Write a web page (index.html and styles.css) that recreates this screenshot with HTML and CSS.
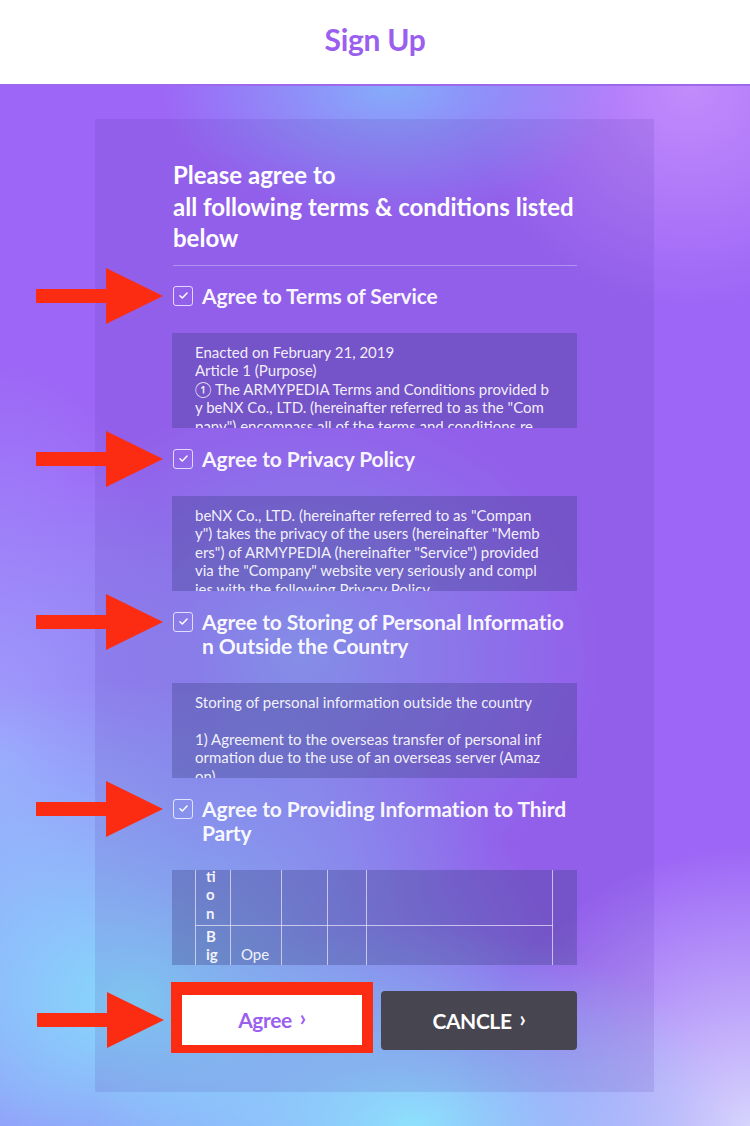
FILE: index.html
```html
<!DOCTYPE html>
<html lang="en">
<head>
<meta charset="utf-8">
<title>Sign Up</title>
<link rel="stylesheet" href="styles.css">
</head>
<body>
<header class="topbar">
  <h1 class="topbar-title">Sign Up</h1>
</header>
<main class="page">
  <section class="card">
    <h2 class="intro">Please agree to<br>all following terms &amp; conditions listed<br>below</h2>
    <hr class="divider">

    <div class="agree-row">
      <svg class="arrow" viewBox="0 0 127 56" aria-hidden="true"><path d="M0 21H70V0L127 28L70 56V35H0Z"/></svg>
      <span class="check"><svg viewBox="0 0 20 20"><path d="M5.8 10.2l2.8 2.8L14.2 7"/></svg></span>
      <span class="agree-label">Agree to Terms of Service</span>
    </div>
    <div class="terms-box">
      <p class="terms-text">Enacted on February 21, 2019<br>Article 1 (Purpose)<br>&#9312; The ARMYPEDIA Terms and Conditions provided b<br>y beNX Co., LTD. (hereinafter referred to as the "Com<br>pany") encompass all of the terms and conditions re</p>
    </div>

    <div class="agree-row">
      <svg class="arrow" viewBox="0 0 127 56" aria-hidden="true"><path d="M0 21H70V0L127 28L70 56V35H0Z"/></svg>
      <span class="check"><svg viewBox="0 0 20 20"><path d="M5.8 10.2l2.8 2.8L14.2 7"/></svg></span>
      <span class="agree-label">Agree to Privacy Policy</span>
    </div>
    <div class="terms-box">
      <p class="terms-text">beNX Co., LTD. (hereinafter referred to as "Compan<br>y") takes the privacy of the users (hereinafter "Memb<br>ers") of ARMYPEDIA (hereinafter "Service") provided<br>via the "Company" website very seriously and compl<br>ies with the following Privacy Policy.</p>
    </div>

    <div class="agree-row">
      <svg class="arrow" viewBox="0 0 127 56" aria-hidden="true"><path d="M0 21H70V0L127 28L70 56V35H0Z"/></svg>
      <span class="check"><svg viewBox="0 0 20 20"><path d="M5.8 10.2l2.8 2.8L14.2 7"/></svg></span>
      <span class="agree-label">Agree to Storing of Personal Informatio<br>n Outside the Country</span>
    </div>
    <div class="terms-box">
      <p class="terms-text">Storing of personal information outside the country<br>&nbsp;<br>1) Agreement to the overseas transfer of personal inf<br>ormation due to the use of an overseas server (Amaz<br>on)</p>
    </div>

    <div class="agree-row">
      <svg class="arrow" viewBox="0 0 127 56" aria-hidden="true"><path d="M0 21H70V0L127 28L70 56V35H0Z"/></svg>
      <span class="check"><svg viewBox="0 0 20 20"><path d="M5.8 10.2l2.8 2.8L14.2 7"/></svg></span>
      <span class="agree-label">Agree to Providing Information to Third<br>Party</span>
    </div>
    <div class="terms-box table-box">
      <table class="info-table">
        <colgroup>
          <col class="c1"><col class="c2"><col class="c3"><col class="c4"><col class="c5">
        </colgroup>
        <tr class="r1">
          <td class="narrow"><div class="cut">ti<br>o<br>n</div></td>
          <td></td><td></td><td></td><td></td>
        </tr>
        <tr class="r2">
          <td class="narrow">B<br>ig</td>
          <td class="low">Ope</td><td></td><td></td><td></td>
        </tr>
      </table>
    </div>

    <div class="actions">
      <svg class="arrow arrow-btn" viewBox="0 0 127 56" aria-hidden="true"><path d="M0 21H70V0L127 28L70 56V35H0Z"/></svg>
      <button class="btn btn-agree">Agree <span class="chev">&#8250;</span></button>
      <button class="btn btn-cancel">CANCLE <span class="chev">&#8250;</span></button>
    </div>
  </section>
</main>
</body>
</html>
```

FILE: styles.css
```css
html, body {
  margin: 0;
  padding: 0;
}

body {
  width: 750px;
  min-height: 1126px;
  font-family: Lato, "Noto Sans", sans-serif;
  color: #fff;
  background-color: #9d66f6;
}

.topbar {
  height: 78px;
  padding-bottom: 6px;
  box-sizing: content-box;
  background: #fff;
  border-bottom: 2px solid #9e68ee;
  display: flex;
  align-items: center;
  justify-content: center;
}

.topbar-title {
  margin: 0;
  font-size: 30px;
  font-weight: 700;
  color: #9b5ff0;
  letter-spacing: -0.3px;
}

.page {
  min-height: 1040px;
  padding-top: 33px;
  box-sizing: border-box;
  background:
    radial-gradient(ellipse 230px 130px at 52% 0%, #85acfa, rgba(133,172,250,0)),
    radial-gradient(ellipse 220px 220px at 92% 0%, #c28cfc, rgba(194,140,252,0)),
    radial-gradient(ellipse 430px 320px at 18% 88%, #86dcfc, rgba(134,220,252,0)),
    radial-gradient(ellipse 320px 200px at 55% 100%, #90e2fc, rgba(144,226,252,0)),
    radial-gradient(ellipse 280px 280px at 100% 100%, #d6d4fd, rgba(214,212,253,0)),
    radial-gradient(ellipse 300px 260px at 40% 55%, #8c9cf2, rgba(140,156,242,0)),
    radial-gradient(ellipse 200px 400px at 0% 65%, #9ea2fc, rgba(158,162,252,0)),
    #9d66f6;
}

.card {
  width: 559px;
  margin: 0 0 0 95px;
  padding: 40px 77px 39px 77px;
  box-sizing: border-box;
  background: rgba(88, 56, 170, 0.14);
}

.intro {
  margin: 0 0 0 1px;
  font-size: 24px;
  line-height: 31.5px;
  font-weight: 700;
  letter-spacing: 0;
  color: #fff;
}

.divider {
  margin: 11px 0 0 1px;
  border: 0;
  height: 1px;
  background: rgba(255, 255, 255, 0.3);
}

.agree-row {
  position: relative;
  display: flex;
  align-items: flex-start;
  gap: 9px;
  margin-top: 19px;
  padding-left: 1px;
}

.divider + .agree-row {
  margin-top: 18px;
}

.arrow {
  position: absolute;
  left: -136px;
  top: -16px;
  width: 127px;
  height: 56px;
  fill: #fb2c12;
}

.check {
  flex: 0 0 auto;
  width: 20px;
  height: 20px;
  margin-top: 2px;
  box-sizing: border-box;
  border: 1.5px solid rgba(255, 255, 255, 0.75);
  border-radius: 3px;
  display: flex;
  align-items: center;
  justify-content: center;
}

.check svg {
  width: 17px;
  height: 17px;
  fill: none;
  stroke: #fff;
  stroke-width: 1.7;
  stroke-linecap: round;
  stroke-linejoin: round;
}

.agree-label {
  font-size: 21px;
  line-height: 24px;
  font-weight: 700;
  letter-spacing: -0.1px;
  color: rgba(255, 255, 255, 0.96);
}

.terms-box {
  margin-top: 25px;
  height: 95px;
  overflow: hidden;
  background: rgba(55, 58, 128, 0.32);
  padding: 10px 24px 0 23px;
  box-sizing: border-box;
}

.terms-text {
  margin: 0;
  font-size: 15px;
  line-height: 18.6px;
  letter-spacing: 0;
  white-space: nowrap;
  color: rgba(255, 255, 255, 0.92);
}

.table-box {
  padding: 0 24px 0 23px;
}

.info-table {
  border-collapse: collapse;
  table-layout: fixed;
  width: 357px;
  font-size: 15px;
  line-height: 18.5px;
  color: rgba(255, 255, 255, 0.92);
}

.info-table col.c1 { width: 35px; }
.info-table col.c2 { width: 51px; }
.info-table col.c3 { width: 46px; }
.info-table col.c4 { width: 39px; }
.info-table col.c5 { width: 186px; }

.info-table td {
  border: 1.5px solid rgba(230, 225, 245, 0.75);
  border-top: 0;
  padding: 0 0 0 10px;
  vertical-align: top;
}

.info-table tr.r1 td {
  height: 55px;
}

.info-table tr.r2 td {
  height: 60px;
  padding-top: 1px;
}

.info-table td.narrow {
  padding-left: 10px;
  font-weight: 700;
}

.cut {
  margin-top: -3px;
}

.info-table tr.r2 td.low {
  padding-top: 19px;
}

.actions {
  position: relative;
  display: flex;
  align-items: flex-start;
  gap: 8px;
  margin-top: 17px;
}

.arrow-btn {
  top: 10px;
  left: -135px;
}

.btn {
  font-family: Lato, "Noto Sans", sans-serif;
  font-size: 21px;
  font-weight: 700;
  letter-spacing: -0.4px;
  cursor: pointer;
  display: flex;
  align-items: center;
  justify-content: center;
  gap: 8px;
  box-sizing: border-box;
}

.btn-agree {
  width: 202px;
  height: 71px;
  margin-left: -1px;
  background: #fff;
  color: #9b5ff0;
  border: 11px solid #fb2c12;
  border-top-width: 13px;
  border-bottom-width: 8px;
  border-radius: 0;
}

.btn-cancel {
  width: 196px;
  height: 59px;
  margin-top: 9px;
  background: #47454f;
  color: #fff;
  border: 0;
  border-radius: 4px;
}

.chev {
  font-size: 22px;
  font-weight: 700;
  line-height: 1;
  margin-top: -3px;
}
```
